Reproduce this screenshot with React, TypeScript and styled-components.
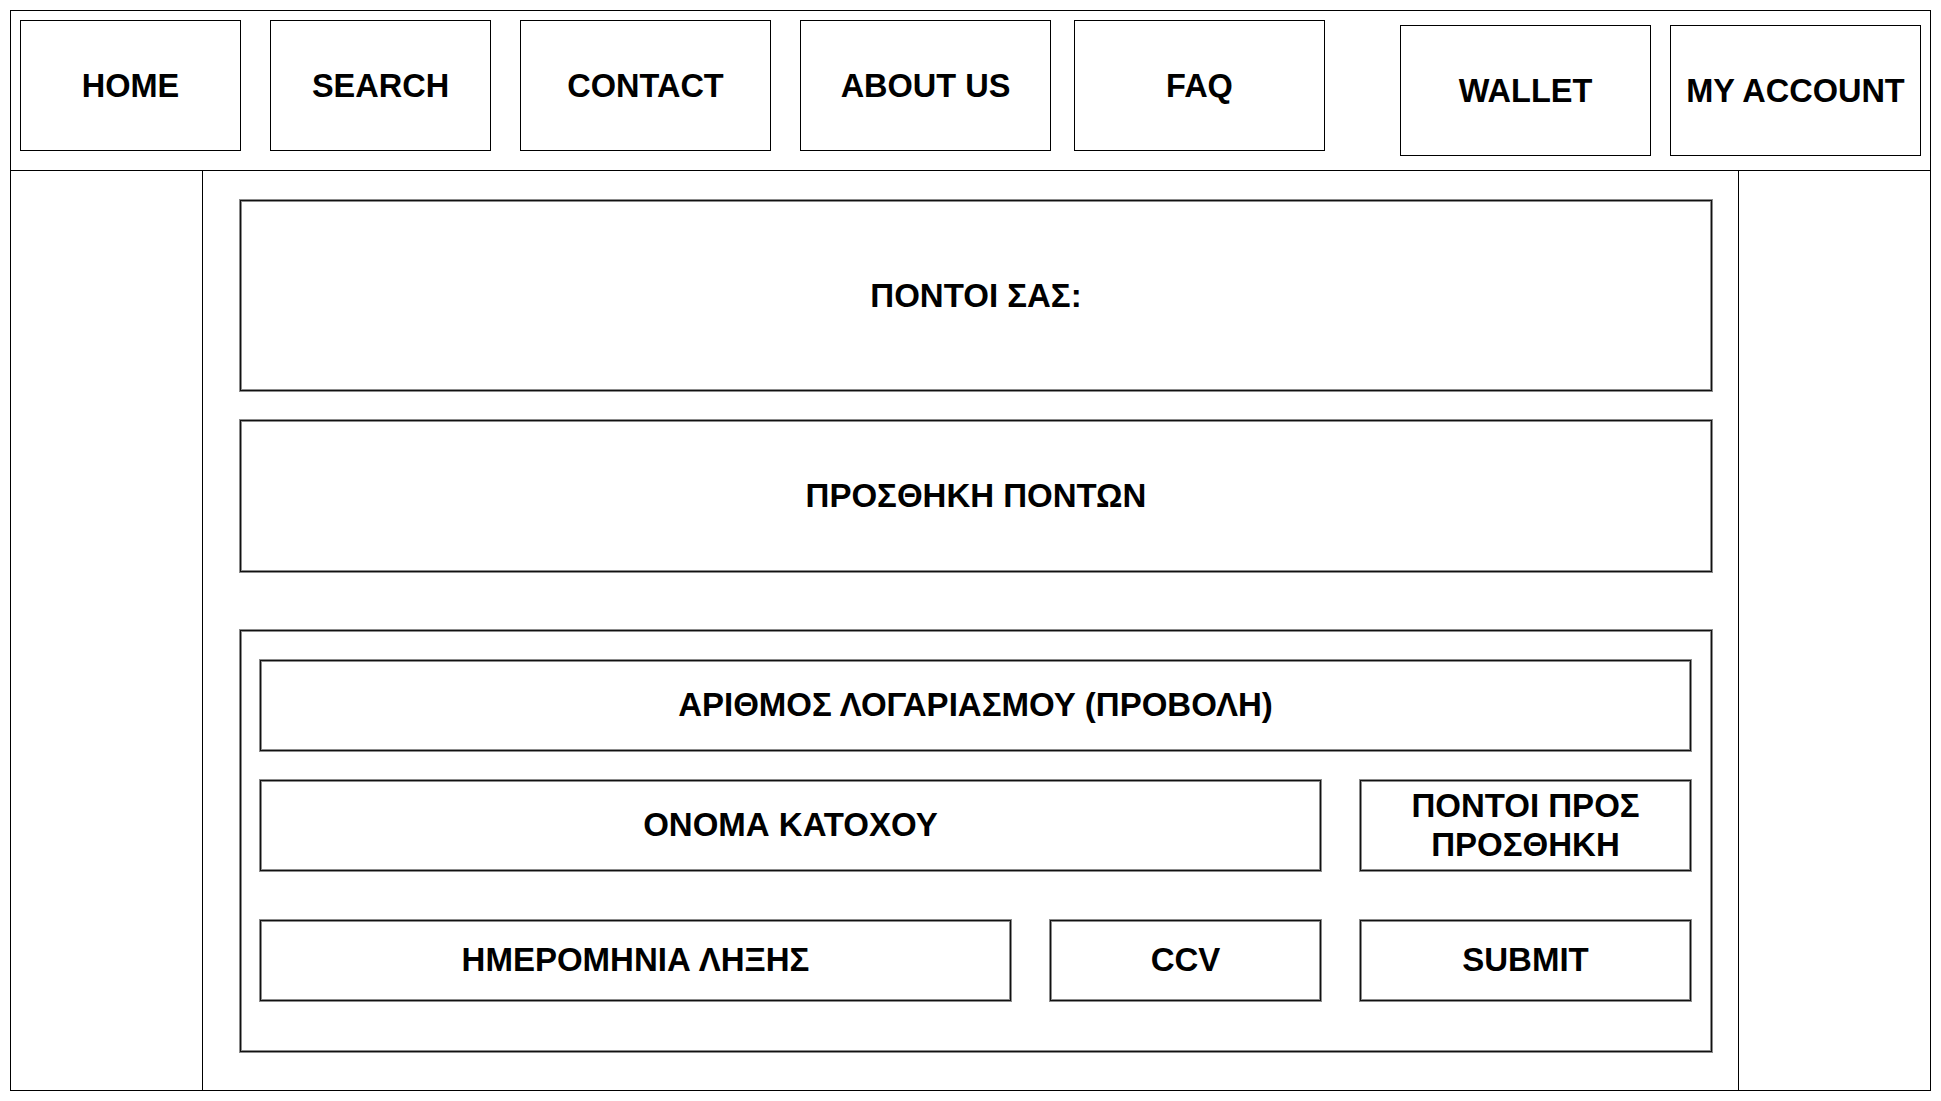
import styled, { createGlobalStyle } from 'styled-components';

const GlobalStyle = createGlobalStyle`
  body {
    margin: 0;
    background: #fff;
    font-family: "Liberation Sans", Arial, sans-serif;
    color: #000;
  }
`;

const Frame = styled.div`
  margin: 10px;
  width: 1921px;
  height: 1081px;
  box-sizing: border-box;
  border: 1px solid #000;
  display: flex;
  flex-direction: column;
`;

const Header = styled.header`
  height: 160px;
  box-sizing: border-box;
  border-bottom: 1px solid #000;
  padding: 9px 9px 0 9px;
  display: flex;
  align-items: flex-start;
`;

const NavBox = styled.div<{ $w: number; $ml?: string; $mt?: number }>`
  width: ${(p) => p.$w}px;
  height: 131px;
  margin-left: ${(p) => p.$ml ?? '0'};
  margin-top: ${(p) => p.$mt ?? 0}px;
  box-sizing: border-box;
  border: 1px solid #000;
  display: flex;
  align-items: center;
  justify-content: center;
  padding-top: 2px;
  font-size: 32.5px;
  font-weight: bold;
  white-space: nowrap;
`;

const Body = styled.div`
  flex: 1;
  display: flex;
`;

const SideLeft = styled.aside`
  width: 192px;
  box-sizing: border-box;
  border-right: 1px solid #000;
`;

const SideRight = styled.aside`
  width: 192px;
  box-sizing: border-box;
  border-left: 1px solid #000;
`;

const Main = styled.main`
  flex: 1;
  padding: 28px 0 0 36px;
  display: flex;
  flex-direction: column;
`;

// sketchy double-tone outline: grey / black / grey
const outline = `
  box-sizing: border-box;
  border: 1px solid #8c8c8c;
  box-shadow: inset 0 0 0 1px #111, inset 0 0 0 2px #8c8c8c;
`;

const Panel = styled.section<{ $h: number; $mt?: number }>`
  ${outline}
  width: 1474px;
  height: ${(p) => p.$h}px;
  margin-top: ${(p) => p.$mt ?? 0}px;
  display: flex;
  align-items: center;
  justify-content: center;
  font-size: 33px;
  font-weight: bold;
`;

const FormPanel = styled.section`
  ${outline}
  width: 1474px;
  height: 424px;
  margin-top: 56px;
  padding: 29px 20px 0 19px;
  display: flex;
  flex-direction: column;
`;

const FormRow = styled.div<{ $mt?: number }>`
  display: flex;
  justify-content: space-between;
  margin-top: ${(p) => p.$mt ?? 0}px;
`;

const Field = styled.div<{ $w?: number; $h: number }>`
  ${outline}
  width: ${(p) => (p.$w ? `${p.$w}px` : '100%')};
  height: ${(p) => p.$h}px;
  display: flex;
  align-items: center;
  justify-content: center;
  text-align: center;
  font-size: 33px;
  font-weight: bold;
  line-height: 1.18;
  padding: 0 8px;
`;

export default function App() {
  return (
    <>
      <GlobalStyle />
      <Frame>
        <Header>
          <NavBox $w={221}>HOME</NavBox>
          <NavBox $w={221} $ml="29px">SEARCH</NavBox>
          <NavBox $w={251} $ml="29px">CONTACT</NavBox>
          <NavBox $w={251} $ml="29px">ABOUT US</NavBox>
          <NavBox $w={251} $ml="23px">FAQ</NavBox>
          <NavBox $w={251} $ml="auto" $mt={5}>WALLET</NavBox>
          <NavBox $w={251} $ml="19px" $mt={5}>MY ACCOUNT</NavBox>
        </Header>
        <Body>
          <SideLeft />
          <Main>
            <Panel $h={193}>ΠΟΝΤΟΙ ΣΑΣ:</Panel>
            <Panel $h={154} $mt={27}>ΠΡΟΣΘΗΚΗ ΠΟΝΤΩΝ</Panel>
            <FormPanel>
              <Field $h={93}>ΑΡΙΘΜΟΣ ΛΟΓΑΡΙΑΣΜΟΥ (ΠΡΟΒΟΛΗ)</Field>
              <FormRow $mt={27}>
                <Field $w={1063} $h={93}>ΟΝΟΜΑ ΚΑΤΟΧΟΥ</Field>
                <Field $w={333} $h={93}>ΠΟΝΤΟΙ ΠΡΟΣ ΠΡΟΣΘΗΚΗ</Field>
              </FormRow>
              <FormRow $mt={47}>
                <Field $w={753} $h={83}>ΗΜΕΡΟΜΗΝΙΑ ΛΗΞΗΣ</Field>
                <Field $w={273} $h={83}>CCV</Field>
                <Field $w={333} $h={83}>SUBMIT</Field>
              </FormRow>
            </FormPanel>
          </Main>
          <SideRight />
        </Body>
      </Frame>
    </>
  );
}
